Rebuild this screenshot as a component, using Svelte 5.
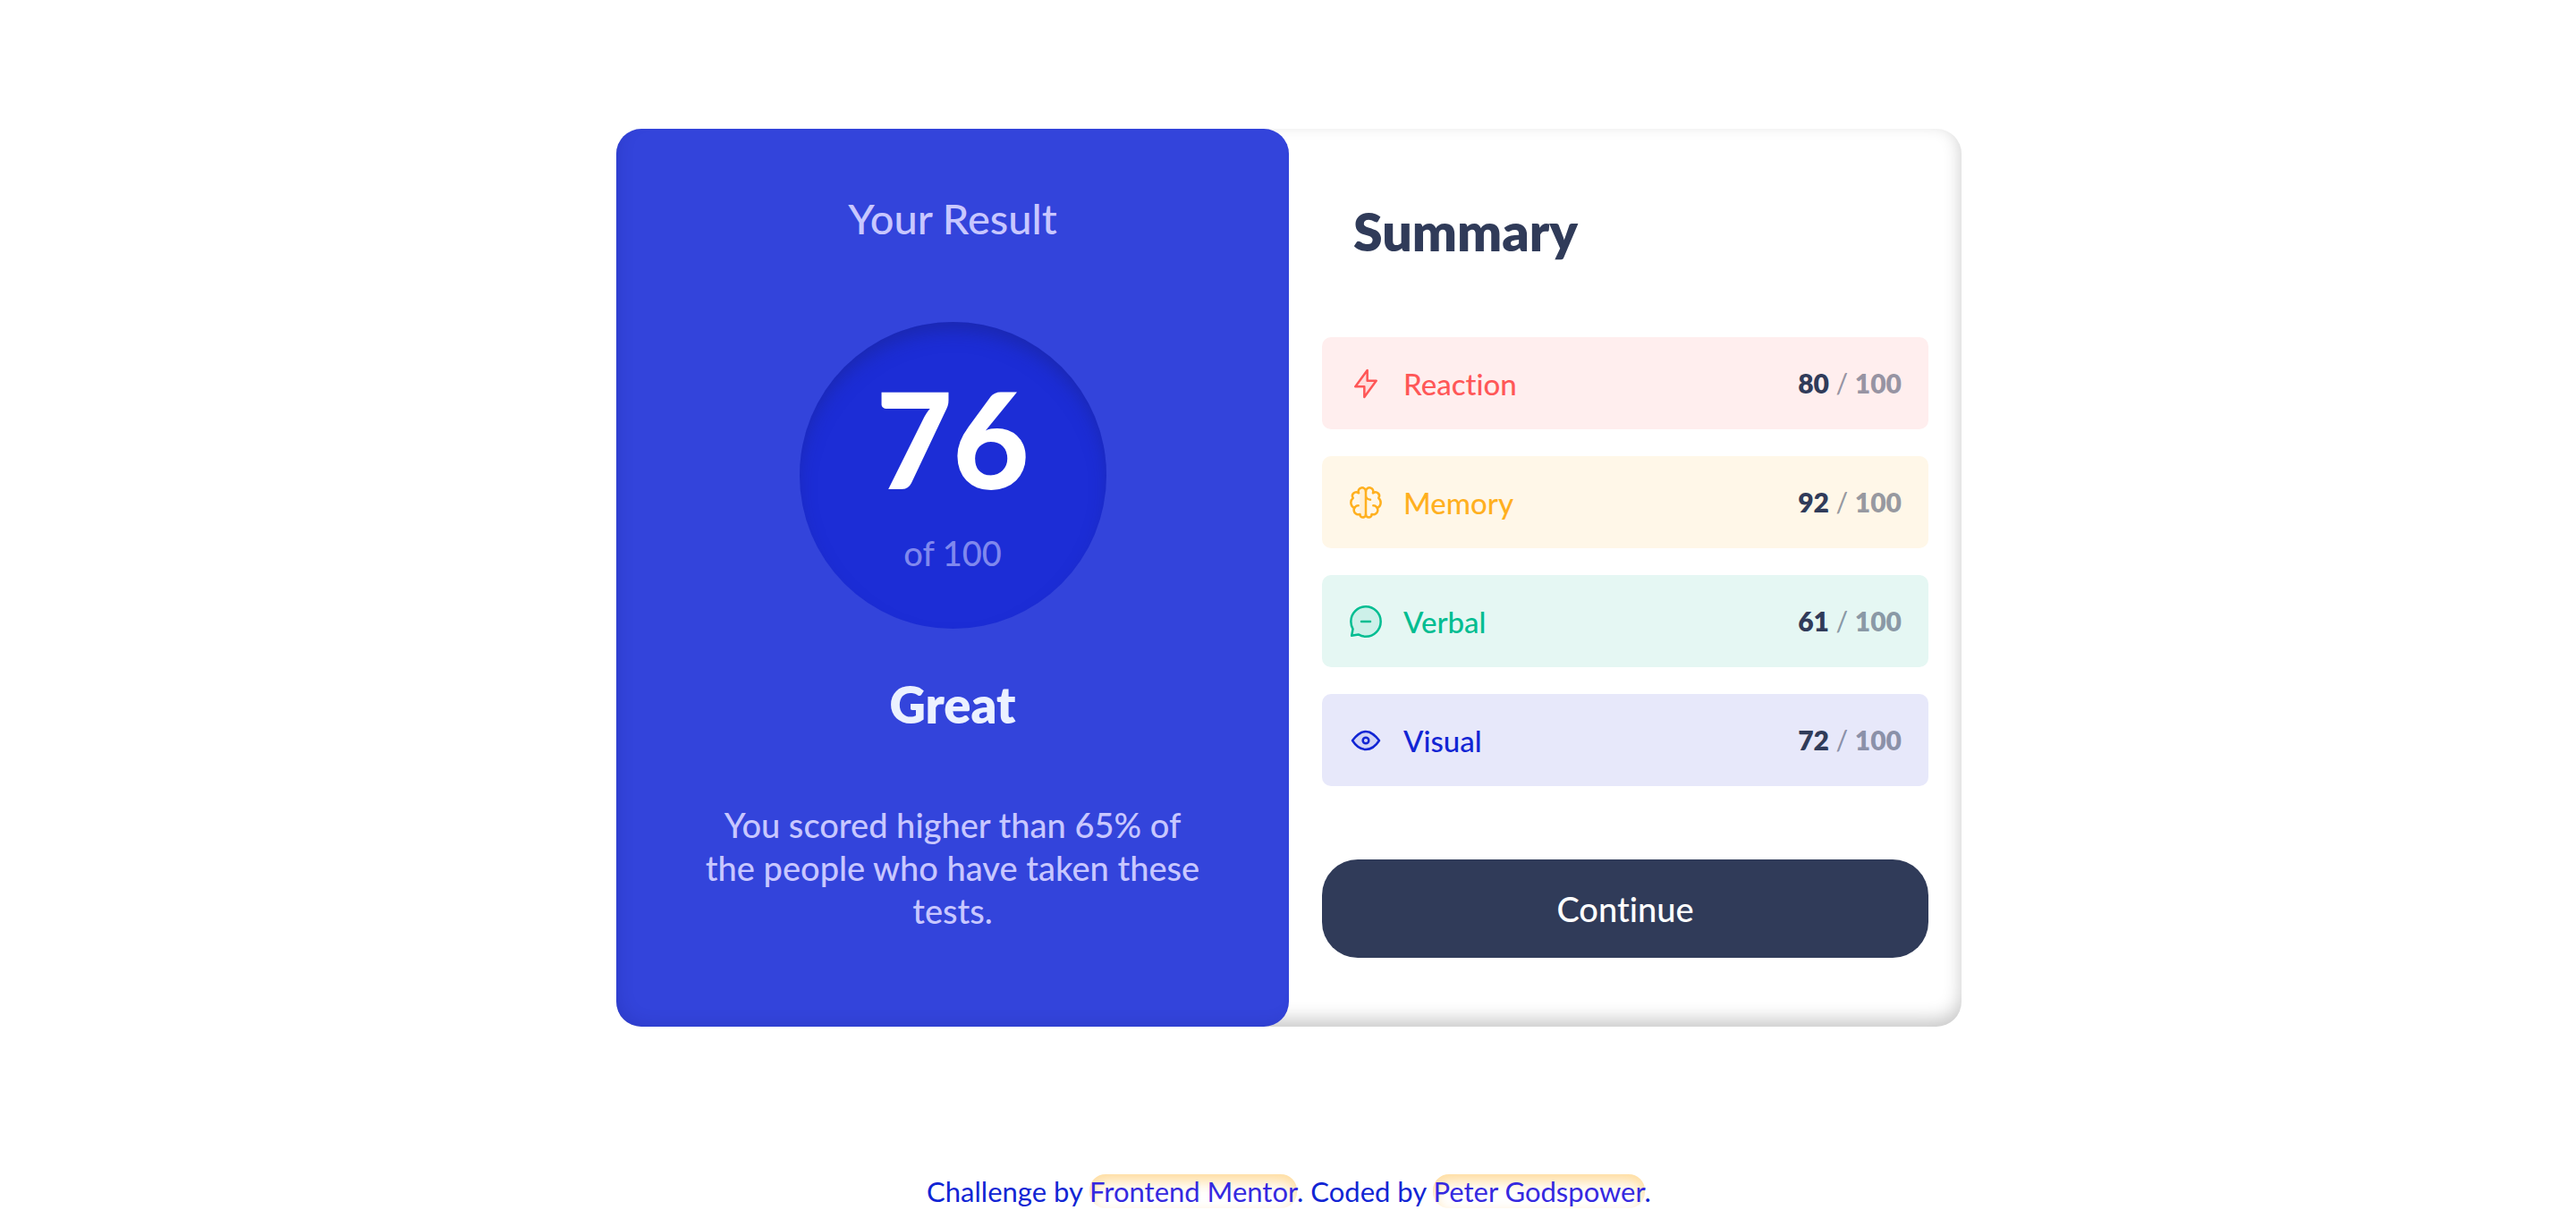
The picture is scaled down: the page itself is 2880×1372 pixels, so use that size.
<script>
  const bolt = 'M10.833 8.333V2.5l-6.666 9.167h5V17.5l6.666-9.167h-5Z';
  const bubble = 'M10 18.333A8.333 8.333 0 1 0 1.667 10c0 1.518.406 2.942 1.115 4.167l-.699 3.75 3.75-.699A8.295 8.295 0 0 0 10 18.333Z';
  const eye = 'M17.5 10c-1.574 2.492-4.402 5-7.5 5s-5.926-2.508-7.5-5C4.416 7.632 6.66 5 10 5s5.584 2.632 7.5 5Z';

  const results = [
    { name: 'Reaction', score: 80, tone: 'red', tint: bolt, lines: [bolt] },
    {
      name: 'Memory',
      score: 92,
      tone: 'yellow',
      tint: 'M10 3.75A2.083 2.083 0 0 0 6.667 2.1v14.567a1.667 1.667 0 0 0 3.333 0Z',
      lines: [
        'M5.833 11.667a2.5 2.5 0 1 0 .834 4.858',
        'M3.553 13.004a3.333 3.333 0 0 1-.728-5.53m.025-.067a2.083 2.083 0 0 1 2.983-2.824m.199.054A2.083 2.083 0 1 1 10 3.75v12.917a1.667 1.667 0 0 1-3.333 0M10 5.833a2.5 2.5 0 0 0 2.5 2.5m1.667 3.334a2.5 2.5 0 1 1-.834 4.858',
        'M16.447 13.004a3.334 3.334 0 0 0 .728-5.53m-.025-.067a2.083 2.083 0 0 0-2.983-2.824M10 3.75a2.085 2.085 0 0 1 2.538-2.033 2.084 2.084 0 0 1 1.43 2.92m-.635 12.03a1.667 1.667 0 0 1-3.333 0'
      ]
    },
    { name: 'Verbal', score: 61, tone: 'green', tint: bubble, lines: ['M7.5 10h5', bubble] },
    {
      name: 'Visual',
      score: 72,
      tone: 'blue',
      tint: eye,
      lines: ['M10 11.667a1.667 1.667 0 1 0 0-3.334 1.667 1.667 0 0 0 0 3.334Z', eye]
    }
  ];
</script>

<main>
  <div class="card">
    <section class="result">
      <h1>Your Result</h1>
      <div class="circle">
        <strong>76</strong>
        <span>of 100</span>
      </div>
      <h2>Great</h2>
      <p>You scored higher than 65% of the people who have taken these tests.</p>
    </section>
    <section class="summary">
      <h2>Summary</h2>
      <ul>
        {#each results as item}
          <li class={item.tone}>
            <svg viewBox="0 0 20 20" aria-hidden="true">
              <path class="tint" d={item.tint} />
              {#each item.lines as d}<path class="line" {d} />{/each}
            </svg>
            <span class="name">{item.name}</span>
            <span class="score"><b>{item.score}</b> / <b class="total">100</b></span>
          </li>
        {/each}
      </ul>
      <button type="button">Continue</button>
    </section>
  </div>
</main>
<footer>
  Challenge by <a href="https://www.frontendmentor.io">Frontend Mentor</a>. Coded by <a href="https://github.com">Peter Godspower</a>.
</footer>

<style>
  :global(body) {
    padding-left: 2px;
    background: #fff;
    font-family: Lato, 'Liberation Sans', sans-serif;
    font-weight: 500;
    font-variant-ligatures: none;
  }
  :global(*) { box-sizing: border-box; }
  main {
    display: flex;
    justify-content: center;
    padding: 144px 32px 0;
  }
  .card {
    display: grid;
    grid-template-columns: 1fr 1fr;
    width: 100%;
    max-width: 1504px;
    border-radius: 28px;
    box-shadow: inset 0 -8px 20px rgba(0, 0, 0, 0.22);
  }
  h1, h2, p, ul { margin: 0; }
  .result {
    display: flex;
    flex-direction: column;
    align-items: center;
    padding: 72px 92px 103px;
    border-radius: 28px;
    background: #3344db;
    box-shadow: inset 8px -8px 20px -8px rgba(0, 0, 80, 0.15);
    color: #c8c7ff;
    text-align: center;
  }
  h1 {
    font-size: 47px;
    line-height: 56px;
    font-weight: 500;
  }
  .circle {
    display: flex;
    flex-direction: column;
    align-items: center;
    width: 343px;
    height: 343px;
    margin-top: 88px;
    padding-top: 56px;
    border-radius: 50%;
    background: #1c2dd6;
    box-shadow: inset 0 14px 20px -4px rgba(26, 36, 140, 0.5);
  }
  .circle strong {
    color: #fff;
    font-size: 148px;
    line-height: 148px;
    font-weight: 900;
  }
  .circle span {
    color: #8088ee;
    font-size: 38px;
    line-height: 48px;
    margin-top: 30px;
  }
  .result h2 {
    margin-top: 53px;
    color: #ebf1ff;
    font-size: 56px;
    line-height: 64px;
    font-weight: 800;
  }
  .result p {
    margin-top: 78px;
    font-size: 38px;
    line-height: 48px;
  }
  .summary {
    display: flex;
    flex-direction: column;
    padding: 79px 37px 77px;
  }
  .summary h2 {
    padding-left: 35px;
    color: #303b59;
    font-size: 59px;
    line-height: 72px;
    font-weight: 800;
  }
  ul {
    display: grid;
    gap: 30px;
    margin-top: 82px;
    padding: 0;
    list-style: none;
  }
  li {
    display: flex;
    align-items: center;
    height: 103px;
    padding: 0 30px 0 29px;
    border-radius: 10px;
  }
  svg { width: 40px; height: 40px; }
  .line {
    fill: none;
    stroke: currentColor;
    stroke-width: 1.25;
    stroke-linecap: round;
    stroke-linejoin: round;
  }
  .tint { fill: currentColor; opacity: 0.1; }
  .name {
    margin-left: 22px;
    font-size: 33px;
    line-height: 40px;
  }
  .score {
    margin-left: auto;
    padding-bottom: 2px;
    color: rgba(48, 59, 89, 0.5);
    font-size: 30px;
    line-height: 40px;
  }
  .score b { color: #303b59; font-weight: 800; }
  .score .total { color: inherit; font-weight: 800; }
  .red { background: #ffeeee; color: #ff5757; }
  .yellow { background: #fff7e8; color: #ffb01f; }
  .green { background: #e5f7f3; color: #00bd91; }
  .blue { background: #e7e8fa; color: #1125d4; }
  button {
    height: 110px;
    margin-top: 82px;
    border: 0;
    border-radius: 40px;
    background: #303b59;
    color: #fff;
    font: inherit;
    font-size: 38px;
  }
  footer {
    margin-top: 160px;
    padding: 0 32px;
    color: #1125d4;
    font-size: 31px;
    line-height: 48px;
    font-weight: 400;
    text-align: center;
  }
  a {
    border-radius: 18px;
    box-shadow: inset 0 8px 16px rgba(255, 176, 31, 0.45);
    color: #3529e0;
    text-decoration: none;
  }
</style>
